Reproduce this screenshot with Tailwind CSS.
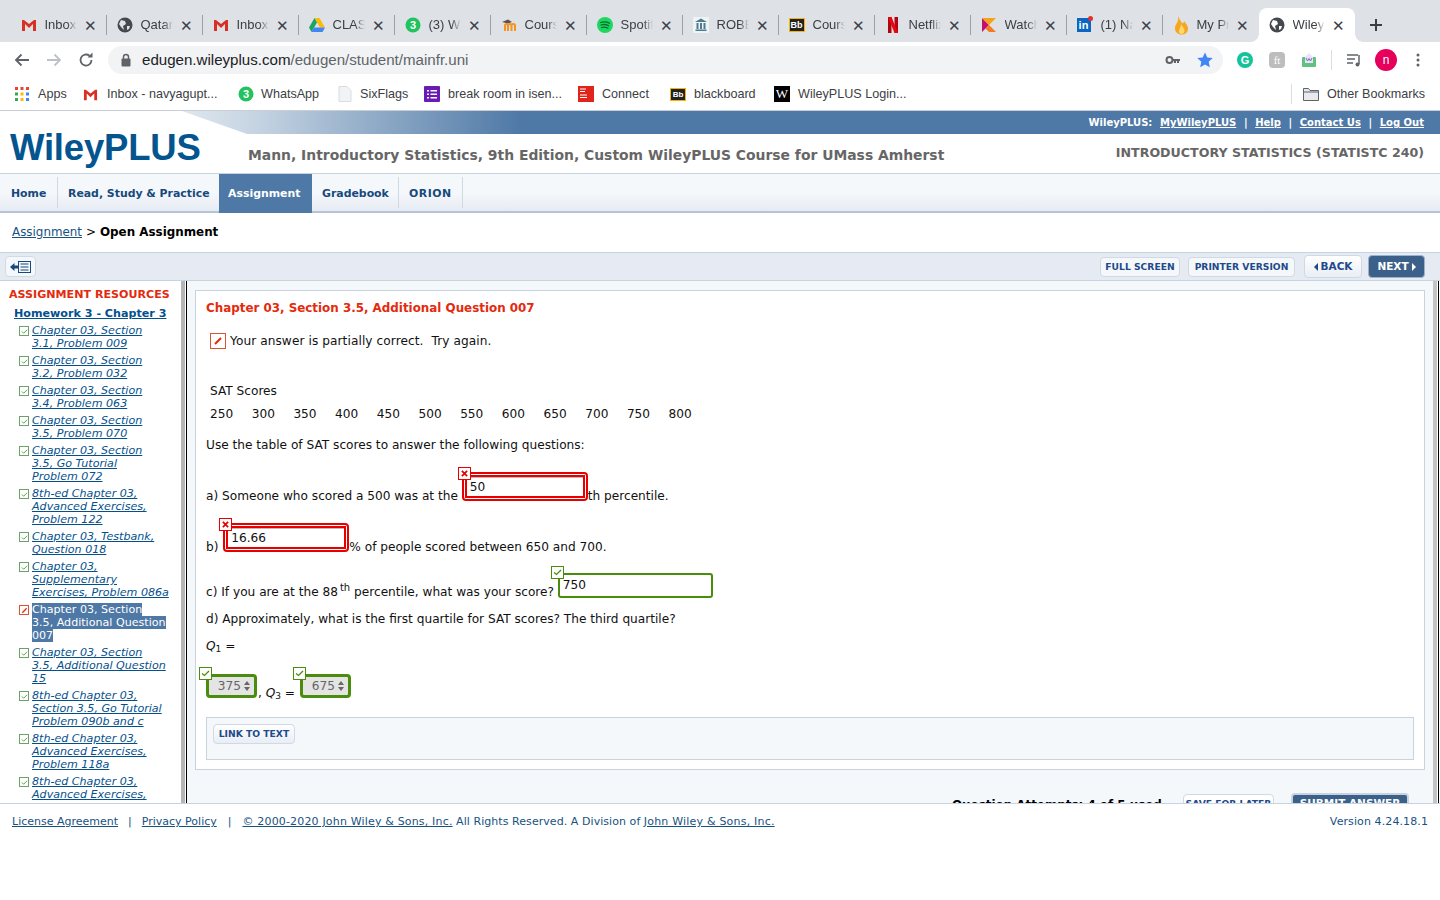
<!DOCTYPE html>
<html lang="en">
<head>
<meta charset="UTF-8">
<title>WileyPLUS</title>
<script src="https://cdn.jsdelivr.net/npm/@tailwindcss/browser@4"></script>
</head>
<body class="w-[1440px] h-[900px] overflow-hidden bg-white font-['DejaVu_Sans',sans-serif] text-black">

<!-- browser tabs -->
<div class="h-[42px] bg-[#dee1e6] flex items-end pl-[10.5px] font-['Liberation_Sans',sans-serif] text-[13px] text-[#3c4043]">
  <div class="w-24 h-[34px] flex items-center pl-[10px] relative"><svg class="w-4 h-4 shrink-0" viewBox="0 0 16 16"><path d="M1 3h2l5 4 5-4h2v11h-3V7L8 11 4 7v7H1z" fill="#d93025"/></svg><span class="ml-2 w-[32px] overflow-hidden whitespace-nowrap [mask-image:linear-gradient(to_right,black_70%,transparent)]">Inbox</span><span class="ml-[7px] text-[15px] leading-none">✕</span><i class="absolute right-0 top-[7px] h-5 w-px bg-[#9aa0a6]"></i></div>
  <div class="w-24 h-[34px] flex items-center pl-[10px] relative"><svg class="w-4 h-4 shrink-0" viewBox="0 0 16 16"><circle cx="8" cy="8" r="7.5" fill="#45494d"/><path d="M4 3l4 1 1 3-3 2 1 4-3-3-2-3zM10 9l3 0-1 3-2 1z" fill="#dee1e6"/></svg><span class="ml-2 w-[32px] overflow-hidden whitespace-nowrap [mask-image:linear-gradient(to_right,black_70%,transparent)]">Qatar</span><span class="ml-[7px] text-[15px] leading-none">✕</span><i class="absolute right-0 top-[7px] h-5 w-px bg-[#9aa0a6]"></i></div>
  <div class="w-24 h-[34px] flex items-center pl-[10px] relative"><svg class="w-4 h-4 shrink-0" viewBox="0 0 16 16"><path d="M1 3h2l5 4 5-4h2v11h-3V7L8 11 4 7v7H1z" fill="#d93025"/></svg><span class="ml-2 w-[32px] overflow-hidden whitespace-nowrap [mask-image:linear-gradient(to_right,black_70%,transparent)]">Inbox</span><span class="ml-[7px] text-[15px] leading-none">✕</span><i class="absolute right-0 top-[7px] h-5 w-px bg-[#9aa0a6]"></i></div>
  <div class="w-24 h-[34px] flex items-center pl-[10px] relative"><svg class="w-4 h-4 shrink-0" viewBox="0 0 16 16"><path d="M5.500 1h5L16 10.500h-5z" fill="#fbbc04"/><path d="M5.500 1 0 10.500 2.500 15 8 5.500z" fill="#1ea362"/><path d="M2.500 15h11l2.500-4.500H5z" fill="#4285f4"/></svg><span class="ml-2 w-[32px] overflow-hidden whitespace-nowrap [mask-image:linear-gradient(to_right,black_70%,transparent)]">CLASS</span><span class="ml-[7px] text-[15px] leading-none">✕</span><i class="absolute right-0 top-[7px] h-5 w-px bg-[#9aa0a6]"></i></div>
  <div class="w-24 h-[34px] flex items-center pl-[10px] relative"><svg class="w-4 h-4 shrink-0" viewBox="0 0 16 16"><circle cx="8" cy="8" r="7.500" fill="#22c35e"/><text x="8" y="12" font-size="11" font-weight="700" text-anchor="middle" fill="#fff" font-family="Liberation Sans">3</text></svg><span class="ml-2 w-[32px] overflow-hidden whitespace-nowrap [mask-image:linear-gradient(to_right,black_70%,transparent)]">(3) Wh</span><span class="ml-[7px] text-[15px] leading-none">✕</span><i class="absolute right-0 top-[7px] h-5 w-px bg-[#9aa0a6]"></i></div>
  <div class="w-24 h-[34px] flex items-center pl-[10px] relative"><svg class="w-4 h-4 shrink-0" viewBox="0 0 16 16"><path d="M1 5l6-2.500L11 5 7 6.500z" fill="#555"/><path d="M4 14V8.500c0-2 3-2 3 0V14M7 8.500c0-2 3.500-2 3.500 0V14M10.500 8.500c0-2 3.500-2 3.500 0V14" fill="none" stroke="#f7931e" stroke-width="2"/></svg><span class="ml-2 w-[32px] overflow-hidden whitespace-nowrap [mask-image:linear-gradient(to_right,black_70%,transparent)]">Course</span><span class="ml-[7px] text-[15px] leading-none">✕</span><i class="absolute right-0 top-[7px] h-5 w-px bg-[#9aa0a6]"></i></div>
  <div class="w-24 h-[34px] flex items-center pl-[10px] relative"><svg class="w-4 h-4 shrink-0" viewBox="0 0 16 16"><circle cx="8" cy="8" r="8" fill="#1ed760"/><path d="M3.500 5.500c3-1 6.500-.7 9 .7M4 8c2.500-.8 5.500-.5 7.700.7M4.500 10.500c2-.6 4.500-.4 6.300.6" fill="none" stroke="#0b6b30" stroke-width="1.300" stroke-linecap="round"/></svg><span class="ml-2 w-[32px] overflow-hidden whitespace-nowrap [mask-image:linear-gradient(to_right,black_70%,transparent)]">Spotify</span><span class="ml-[7px] text-[15px] leading-none">✕</span><i class="absolute right-0 top-[7px] h-5 w-px bg-[#9aa0a6]"></i></div>
  <div class="w-24 h-[34px] flex items-center pl-[10px] relative"><svg class="w-4 h-4 shrink-0" viewBox="0 0 16 16"><rect width="16" height="16" fill="#eef3f5"/><path d="M8 1.500 14 5H2zM2.500 12.500h11V14h-11zM3.500 6h2v6h-2zM7 6h2v6H7zM10.500 6h2v6h-2z" fill="#4d7c8f"/></svg><span class="ml-2 w-[32px] overflow-hidden whitespace-nowrap [mask-image:linear-gradient(to_right,black_70%,transparent)]">ROBE</span><span class="ml-[7px] text-[15px] leading-none">✕</span><i class="absolute right-0 top-[7px] h-5 w-px bg-[#9aa0a6]"></i></div>
  <div class="w-24 h-[34px] flex items-center pl-[10px] relative"><span class="w-4 h-[14px] shrink-0 bg-[#222] border border-[#f5b400] text-white font-bold text-[9px] leading-[12px] text-center">Bb</span><span class="ml-2 w-[32px] overflow-hidden whitespace-nowrap [mask-image:linear-gradient(to_right,black_70%,transparent)]">Course</span><span class="ml-[7px] text-[15px] leading-none">✕</span><i class="absolute right-0 top-[7px] h-5 w-px bg-[#9aa0a6]"></i></div>
  <div class="w-24 h-[34px] flex items-center pl-[10px] relative"><svg class="w-4 h-4 shrink-0" viewBox="0 0 16 16"><path d="M3 0h3.500v16L3 16z" fill="#b1060f"/><path d="M9.500 0H13v16H9.500z" fill="#b1060f"/><path d="M3 0h3.500l6.500 16H9.500z" fill="#e50914"/></svg><span class="ml-2 w-[32px] overflow-hidden whitespace-nowrap [mask-image:linear-gradient(to_right,black_70%,transparent)]">Netflix</span><span class="ml-[7px] text-[15px] leading-none">✕</span><i class="absolute right-0 top-[7px] h-5 w-px bg-[#9aa0a6]"></i></div>
  <div class="w-24 h-[34px] flex items-center pl-[10px] relative"><svg class="w-4 h-4 shrink-0" viewBox="0 0 16 16"><path d="M1 1l7 7-7 7z" fill="#c2116d"/><path d="M1 1h7l7 0-7 7z" fill="#f7a11a"/><path d="M8 8l7 7H8l-3.500-3.500z" fill="#f47b20"/></svg><span class="ml-2 w-[32px] overflow-hidden whitespace-nowrap [mask-image:linear-gradient(to_right,black_70%,transparent)]">Watch</span><span class="ml-[7px] text-[15px] leading-none">✕</span><i class="absolute right-0 top-[7px] h-5 w-px bg-[#9aa0a6]"></i></div>
  <div class="w-24 h-[34px] flex items-center pl-[10px] relative"><span class="relative w-[14px] h-[14px] mr-[2px] shrink-0 bg-[#0a66c2] text-white font-bold text-[11px] leading-[14px] text-center">in<i class="absolute -top-[2px] -right-[2px] w-[5px] h-[5px] rounded-full bg-[#e0312d]"></i></span><span class="ml-2 w-[32px] overflow-hidden whitespace-nowrap [mask-image:linear-gradient(to_right,black_70%,transparent)]">(1) Nav</span><span class="ml-[7px] text-[15px] leading-none">✕</span><i class="absolute right-0 top-[7px] h-5 w-px bg-[#9aa0a6]"></i></div>
  <div class="w-24 h-[34px] flex items-center pl-[10px] relative"><svg class="w-4 h-[20px] shrink-0" viewBox="0 0 16 20"><path d="M5 1c1 3 3 5 4.500 7.500 1-.5 1.500-1.500 1.500-2.500 2 2.500 4 5 4 7.500 0 4-3 6-6.500 6S2 17 2 13.500c0-2 .5-3.500 1.500-5C5 6.500 5.500 4 5 1z" fill="#f5a623"/><path d="M8 9c1 2.500 3.500 4 3.500 6.500S10 19 8.500 19 5.500 17.500 6 15.500 8 12 8 9z" fill="#ffd76a"/></svg><span class="ml-2 w-[32px] overflow-hidden whitespace-nowrap [mask-image:linear-gradient(to_right,black_70%,transparent)]">My Pro</span><span class="ml-[7px] text-[15px] leading-none">✕</span></div>
  <div class="relative w-24 h-[34px] flex items-center pl-[10px] bg-white rounded-t-lg"><i class="absolute -left-2 bottom-0 w-2 h-2 bg-[radial-gradient(circle_at_0_0,transparent_7.5px,white_8px)]"></i><i class="absolute -right-2 bottom-0 w-2 h-2 bg-[radial-gradient(circle_at_100%_0,transparent_7.5px,white_8px)]"></i><svg class="w-4 h-4 shrink-0" viewBox="0 0 16 16"><circle cx="8" cy="8" r="7.500" fill="#45494d"/><path d="M4 3l4 1 1 3-3 2 1 4-3-3-2-3zM10 9l3 0-1 3-2 1z" fill="#fff"/></svg><span class="ml-2 w-[32px] overflow-hidden whitespace-nowrap [mask-image:linear-gradient(to_right,black_70%,transparent)]">WileyP</span><span class="ml-[7px] text-[15px] leading-none">✕</span></div>
  <svg class="w-3 h-3 ml-[15px] mb-[11px]" viewBox="0 0 12 12"><path d="M6 0v12M0 6h12" stroke="#3c4043" stroke-width="2"/></svg>
</div>

<!-- address bar -->
<div class="h-9 flex items-center relative">
  <svg class="w-4 h-4 ml-[14px]" viewBox="0 0 16 16"><path d="M15 8H2M7.500 2.500 2 8l5.500 5.500" fill="none" stroke="#5f6368" stroke-width="1.800"/></svg>
  <svg class="w-4 h-4 ml-4" viewBox="0 0 16 16"><path d="M1 8h13M8.500 2.500 14 8l-5.500 5.500" fill="none" stroke="#bdc1c6" stroke-width="1.800"/></svg>
  <svg class="w-4 h-4 ml-4" viewBox="0 0 16 16"><path d="M13.500 8A5.500 5.500 0 1 1 11.500 3.800" fill="none" stroke="#5f6368" stroke-width="1.800"/><path d="M9.500 5.500h5v-5z" fill="#5f6368"/></svg>
  <div class="ml-[14px] w-[1115px] h-7 rounded-full bg-[#f1f3f4] flex items-center font-['Liberation_Sans',sans-serif] text-[15.1px]">
    <svg class="w-3 h-3.5 ml-3" viewBox="0 0 12 14"><rect x="1.500" y="5.500" width="9" height="8" rx="1" fill="#5f6368"/><path d="M3.500 6V4a2.500 2.500 0 0 1 5 0v2" fill="none" stroke="#5f6368" stroke-width="1.500"/></svg>
    <span class="ml-[10px] text-[#202124]">edugen.wileyplus.com<span class="text-[#5f6368]">/edugen/student/mainfr.uni</span></span>
    <svg class="w-4 h-4 ml-auto" viewBox="0 0 16 16"><circle cx="4.500" cy="8" r="3" fill="none" stroke="#5f6368" stroke-width="2"/><path d="M7 7h8v2h-1v2h-2V9h-1v2H9V9H7z" fill="#5f6368"/></svg>
    <svg class="w-4 h-4 ml-4 mr-[10px]" viewBox="0 0 16 16"><path d="M8 .5l2.300 5 5.400.6-4 3.700 1.100 5.400L8 12.500l-4.800 2.700 1.100-5.400-4-3.700 5.400-.6z" fill="#4285f4"/></svg>
  </div>
  <span class="ml-[14px] w-4 h-4 rounded-full bg-[#15c39a] text-white text-[11px] leading-4 text-center font-['Liberation_Sans',sans-serif] font-bold">G</span>
  <span class="ml-4 w-4 h-4 rounded-sm bg-[#bdbdbd] text-white text-[11px] leading-4 text-center font-['Liberation_Serif',serif]">ft</span>
  <svg class="w-4 h-4 ml-4" viewBox="0 0 16 16"><path d="M1 6c0-1 1-1 1-1h12s1 0 1 1v8c0 1-1 1-1 1H2s-1 0-1-1z" fill="#5fc27e"/><path d="M4 5l4-4 4 4v6H4z" fill="#e8e3f7"/><path d="M5 6l1.500 3 1.500-2.500L9.500 9 11 6" fill="none" stroke="#7b68c9" stroke-width="1"/></svg>
  <i class="ml-[14px] w-px h-5 bg-[#dadce0]"></i>
  <svg class="w-4 h-4 ml-[14px]" viewBox="0 0 16 16"><path d="M1 3h11M1 7h8M1 11h6" stroke="#5f6368" stroke-width="1.500"/><path d="M13 3v9" stroke="#5f6368" stroke-width="1.500"/><circle cx="11.500" cy="12.500" r="2" fill="#5f6368"/></svg>
  <span class="ml-[13px] w-[22px] h-[22px] rounded-full bg-[#e6005c] text-white text-[12px] leading-[22px] text-center font-['Liberation_Sans',sans-serif]">n</span>
  <svg class="w-1 h-4 ml-[19px]" viewBox="0 0 4 16"><circle cx="2" cy="3" r="1.500" fill="#5f6368"/><circle cx="2" cy="8" r="1.500" fill="#5f6368"/><circle cx="2" cy="13" r="1.500" fill="#5f6368"/></svg>
</div>

<!-- bookmarks -->
<div class="h-8 flex items-center font-['Liberation_Sans',sans-serif] text-[12.6px] text-[#3c4043] whitespace-nowrap border-b border-[#c9ced6] box-content">
  <svg class="w-[14px] h-[14px] ml-[15px]" viewBox="0 0 14 14"><path d="M0 0h3v3H0z" fill="#ea4335"/><path d="M5.500 0h3v3h-3z" fill="#ea4335"/><path d="M11 0h3v3h-3z" fill="#ea4335"/><path d="M0 5.500h3v3H0z" fill="#34a853"/><path d="M5.500 5.500h3v3h-3z" fill="#fbbc04"/><path d="M11 5.500h3v3h-3z" fill="#4285f4"/><path d="M0 11h3v3H0z" fill="#34a853"/><path d="M5.500 11h3v3h-3z" fill="#fbbc04"/><path d="M11 11h3v3h-3z" fill="#4285f4"/></svg>
  <span class="ml-[9px] w-[37px]">Apps</span>
  <svg class="w-[15px] h-[15px] ml-[8px]" viewBox="0 0 16 16"><path d="M1 3h2l5 4 5-4h2v11h-3V7L8 11 4 7v7H1z" fill="#d93025"/></svg>
  <span class="ml-[9px] w-[122px]">Inbox - navyagupt...</span>
  <svg class="w-4 h-4 ml-[9px]" viewBox="0 0 16 16"><circle cx="8" cy="8" r="7.500" fill="#22c35e"/><text x="8" y="12" font-size="11" font-weight="700" text-anchor="middle" fill="#fff" font-family="Liberation Sans">3</text></svg>
  <span class="ml-[7px] w-[65px]">WhatsApp</span>
  <svg class="w-[14px] h-4 ml-[12px]" viewBox="0 0 14 16"><path d="M1 .5h8l4 4v11H1z" fill="#f1f3f4" stroke="#dadce0"/></svg>
  <span class="ml-2 w-[55px]">SixFlags</span>
  <svg class="w-4 h-4 ml-[9px]" viewBox="0 0 16 16"><rect width="16" height="16" rx="1" fill="#6a1bb3"/><path d="M3 4h2v1.500H3zM6.500 4H13v1.500H6.500zM3 7.500h2V9H3zM6.500 7.500H13V9H6.500zM3 11h2v1.500H3zM6.500 11H13v1.500H6.500z" fill="#fff"/></svg>
  <span class="ml-2 w-[122px]">break room in isen...</span>
  <svg class="w-4 h-4 ml-2" viewBox="0 0 16 16"><rect width="16" height="16" fill="#e2231a"/><path d="M2 3h6M2 5.500h5M2 9h7M2 11.500h7" stroke="#fff" stroke-width="1"/></svg>
  <span class="ml-2 w-[60px]">Connect</span>
  <span class="w-4 h-[13px] ml-[8px] bg-[#222] border border-[#f5b400] text-white font-bold text-[8px] leading-[11px] text-center">Bb</span>
  <span class="ml-2 w-[72px]">blackboard</span>
  <span class="w-4 h-4 ml-2 bg-black text-white text-[13px] leading-4 text-center font-['Liberation_Serif',serif]">W</span>
  <span class="ml-2 w-[110px]">WileyPLUS Login...</span>
  <i class="ml-[383px] w-px h-5 bg-[#dadce0]"></i>
  <svg class="w-4 h-[14px] ml-[11px]" viewBox="0 0 16 14"><path d="M.5 1.500h5l1.500 2h8.500v10H.5z" fill="#e8eaed" stroke="#5f6368"/><path d="M.5 5h15" stroke="#5f6368"/></svg>
  <span class="ml-2">Other Bookmarks</span>
</div>

<!-- wiley header -->
<div class="relative h-[23px] bg-white">
  <div class="absolute inset-0 left-[182px] [clip-path:polygon(0_0,100%_0,100%_100%,65px_100%)] bg-[linear-gradient(to_right,#dfe7ef_0px,#c3d2e1_80px,#4e78a6_340px)]"></div>
  <div class="relative h-full flex items-center justify-end pr-4 text-white text-[10px] font-bold gap-[7.6px]"><span>WileyPLUS:</span> <span class="underline">MyWileyPLUS</span> <span>|</span> <span class="underline">Help</span> <span>|</span> <span class="underline">Contact Us</span> <span>|</span> <span class="underline">Log Out</span></div>
</div>
<div class="relative h-[39px] flex whitespace-nowrap">
  <div class="absolute left-[10px] -top-[8px] font-['Liberation_Sans',sans-serif] font-bold text-[36.5px] leading-[44px] text-[#04558f] tracking-[-0.2px]">WileyPLUS</div>
  <div class="ml-[248px] mt-[12px] font-bold text-[13.9px] leading-[18px] text-[#666]">Mann, Introductory Statistics, 9th Edition, Custom WileyPLUS Course for UMass Amherst</div>
  <div class="ml-auto mr-4 mt-[10px] font-bold text-[12.62px] leading-[18px] text-[#666]">INTRODUCTORY STATISTICS (STATISTC 240)</div>
</div>

<!-- nav -->
<div class="h-[40px] border-t border-[#c8d3e0] border-b-2 border-b-[#b4c3d6] bg-[linear-gradient(to_bottom,#f5f8fb,#f5f8fb_50%,#e6ebf3)] flex text-[10.9px] font-bold text-[#17497c]">
  <div class="w-[58px] pl-[11px] pt-[3px] flex items-center my-[3px] border-r border-[#cfd9e4]">Home</div>
  <div class="w-[161px] pl-[10px] pt-[3px] flex items-center">Read, Study &amp; Practice</div>
  <div class="w-[93px] pl-[9px] pt-px flex items-center bg-[#4e78a6] text-white -mb-[2px]">Assignment</div>
  <div class="w-[87px] pl-[10px] pt-[3px] flex items-center my-[3px] border-r border-[#cfd9e4]">Gradebook</div>
  <div class="w-[64px] pl-[10px] pt-[3px] flex items-center my-[3px] border-r border-[#cfd9e4] tracking-[0.5px]">ORION</div>
</div>

<!-- breadcrumb -->
<div class="h-[39px] pl-3 flex items-center text-[11.9px] gap-[4px]"><span class="underline text-[#17527f]">Assignment</span> <span>&gt;</span> <span class="font-bold">Open Assignment</span></div>

<!-- toolbar -->
<div class="h-[29px] bg-[#e6eaf2] border-y border-[#c8d3e0] flex items-center pl-[5px] text-[#1f4a8a] font-bold text-[9.2px]">
  <div class="w-[31px] h-[21px] bg-[#f5f8fb] border border-[#d0d9e4] rounded flex items-center justify-center"><svg class="w-[21px] h-3" viewBox="0 0 21 12"><path d="M0 6l4.500-4v2.500H8v3H4.500V10z" fill="#17497c"/><rect x="8.500" y=".5" width="12" height="11" fill="none" stroke="#17497c"/><path d="M10.500 3h8M10.500 6h8M10.500 9h8" stroke="#17497c"/></svg></div>
  <div class="ml-auto h-5 w-20 bg-[#f5f8fb] border border-[#d0d9e4] rounded flex items-center justify-center">FULL SCREEN</div>
  <div class="ml-2 h-5 w-[107px] bg-[#f5f8fb] border border-[#d0d9e4] rounded flex items-center justify-center">PRINTER VERSION</div>
  <div class="ml-[9px] h-[23px] w-[58px] bg-[linear-gradient(to_bottom,#fff,#e9eef5)] border border-[#d0d9e4] rounded flex items-center justify-center text-[10.5px] gap-[3px]"><span class="w-0 h-0 border-y-[4px] border-y-transparent border-r-[4px] border-r-[#1f4a8a]"></span>BACK</div>
  <div class="ml-[6px] mr-[15px] h-[23px] w-[57px] bg-[#3b618a] border border-[#9eb2c9] rounded flex items-center justify-center text-[10.5px] text-white gap-[3px]">NEXT<span class="w-0 h-0 border-y-[4px] border-y-transparent border-l-[4px] border-l-white"></span></div>
</div>

<!-- main -->
<div class="h-[522px] flex overflow-hidden">
  <aside class="w-[181px] shrink-0 pl-[9px] pt-[7px] overflow-hidden">
    <div class="text-[#e32a0d] font-bold text-[11.1px] leading-[13px] whitespace-nowrap">ASSIGNMENT RESOURCES</div>
    <div class="ml-[5px] mt-[6px] text-[#04508c] underline font-bold text-[11.13px] leading-[13px] whitespace-nowrap">Homework 3 - Chapter 3</div>
    <ul class="mt-[4px] ml-[10px] text-[11.1px] leading-[13px] italic text-[#04508c] whitespace-nowrap">
      <li class="flex gap-[3px] mb-[4px]"><span class="mt-[2px] w-[10px] h-[10px] border border-[#6aa36a] shrink-0 flex items-center justify-center"><svg class="w-[7px] h-[7px]" viewBox="0 0 8 8"><path d="M1 4l2 2 4-4" fill="none" stroke="#4e8f2b" stroke-width="1"/></svg></span><a class="underline block">Chapter 03, Section<br>3.1, Problem 009</a></li>
      <li class="flex gap-[3px] mb-[4px]"><span class="mt-[2px] w-[10px] h-[10px] border border-[#6aa36a] shrink-0 flex items-center justify-center"><svg class="w-[7px] h-[7px]" viewBox="0 0 8 8"><path d="M1 4l2 2 4-4" fill="none" stroke="#4e8f2b" stroke-width="1"/></svg></span><a class="underline block">Chapter 03, Section<br>3.2, Problem 032</a></li>
      <li class="flex gap-[3px] mb-[4px]"><span class="mt-[2px] w-[10px] h-[10px] border border-[#6aa36a] shrink-0 flex items-center justify-center"><svg class="w-[7px] h-[7px]" viewBox="0 0 8 8"><path d="M1 4l2 2 4-4" fill="none" stroke="#4e8f2b" stroke-width="1"/></svg></span><a class="underline block">Chapter 03, Section<br>3.4, Problem 063</a></li>
      <li class="flex gap-[3px] mb-[4px]"><span class="mt-[2px] w-[10px] h-[10px] border border-[#6aa36a] shrink-0 flex items-center justify-center"><svg class="w-[7px] h-[7px]" viewBox="0 0 8 8"><path d="M1 4l2 2 4-4" fill="none" stroke="#4e8f2b" stroke-width="1"/></svg></span><a class="underline block">Chapter 03, Section<br>3.5, Problem 070</a></li>
      <li class="flex gap-[3px] mb-[4px]"><span class="mt-[2px] w-[10px] h-[10px] border border-[#6aa36a] shrink-0 flex items-center justify-center"><svg class="w-[7px] h-[7px]" viewBox="0 0 8 8"><path d="M1 4l2 2 4-4" fill="none" stroke="#4e8f2b" stroke-width="1"/></svg></span><a class="underline block">Chapter 03, Section<br>3.5, Go Tutorial<br>Problem 072</a></li>
      <li class="flex gap-[3px] mb-[4px]"><span class="mt-[2px] w-[10px] h-[10px] border border-[#6aa36a] shrink-0 flex items-center justify-center"><svg class="w-[7px] h-[7px]" viewBox="0 0 8 8"><path d="M1 4l2 2 4-4" fill="none" stroke="#4e8f2b" stroke-width="1"/></svg></span><a class="underline block">8th-ed Chapter 03,<br>Advanced Exercises,<br>Problem 122</a></li>
      <li class="flex gap-[3px] mb-[4px]"><span class="mt-[2px] w-[10px] h-[10px] border border-[#6aa36a] shrink-0 flex items-center justify-center"><svg class="w-[7px] h-[7px]" viewBox="0 0 8 8"><path d="M1 4l2 2 4-4" fill="none" stroke="#4e8f2b" stroke-width="1"/></svg></span><a class="underline block">Chapter 03, Testbank,<br>Question 018</a></li>
      <li class="flex gap-[3px] mb-[4px]"><span class="mt-[2px] w-[10px] h-[10px] border border-[#6aa36a] shrink-0 flex items-center justify-center"><svg class="w-[7px] h-[7px]" viewBox="0 0 8 8"><path d="M1 4l2 2 4-4" fill="none" stroke="#4e8f2b" stroke-width="1"/></svg></span><a class="underline block">Chapter 03,<br>Supplementary<br>Exercises, Problem 086a</a></li>
      <li class="flex gap-[3px] mb-[4px]"><span class="mt-[2px] w-[10px] h-[10px] border border-[#e0512e] shrink-0 flex items-center justify-center"><svg class="w-[7px] h-[7px]" viewBox="0 0 8 8"><path d="M1.500 6.500 6.500 1.500" stroke="#e32a0d" stroke-width="1.500"/></svg></span><a class="block not-italic text-white"><span class="bg-[#4e78a6]">Chapter 03, Section<br>3.5, Additional Question<br>007</span></a></li>
      <li class="flex gap-[3px] mb-[4px]"><span class="mt-[2px] w-[10px] h-[10px] border border-[#6aa36a] shrink-0 flex items-center justify-center"><svg class="w-[7px] h-[7px]" viewBox="0 0 8 8"><path d="M1 4l2 2 4-4" fill="none" stroke="#4e8f2b" stroke-width="1"/></svg></span><a class="underline block">Chapter 03, Section<br>3.5, Additional Question<br>15</a></li>
      <li class="flex gap-[3px] mb-[4px]"><span class="mt-[2px] w-[10px] h-[10px] border border-[#6aa36a] shrink-0 flex items-center justify-center"><svg class="w-[7px] h-[7px]" viewBox="0 0 8 8"><path d="M1 4l2 2 4-4" fill="none" stroke="#4e8f2b" stroke-width="1"/></svg></span><a class="underline block">8th-ed Chapter 03,<br>Section 3.5, Go Tutorial<br>Problem 090b and c</a></li>
      <li class="flex gap-[3px] mb-[4px]"><span class="mt-[2px] w-[10px] h-[10px] border border-[#6aa36a] shrink-0 flex items-center justify-center"><svg class="w-[7px] h-[7px]" viewBox="0 0 8 8"><path d="M1 4l2 2 4-4" fill="none" stroke="#4e8f2b" stroke-width="1"/></svg></span><a class="underline block">8th-ed Chapter 03,<br>Advanced Exercises,<br>Problem 118a</a></li>
      <li class="flex gap-[3px] mb-[4px]"><span class="mt-[2px] w-[10px] h-[10px] border border-[#6aa36a] shrink-0 flex items-center justify-center"><svg class="w-[7px] h-[7px]" viewBox="0 0 8 8"><path d="M1 4l2 2 4-4" fill="none" stroke="#4e8f2b" stroke-width="1"/></svg></span><a class="underline block">8th-ed Chapter 03,<br>Advanced Exercises,<br>Problem 118b</a></li>
    </ul>
  </aside>
  <div class="w-[4px] bg-[#b5b5b5] shrink-0"></div>
  <div class="w-[1px] shrink-0"></div>
  <div class="w-[1px] bg-black shrink-0"></div>
  <div class="w-[1246px] bg-[#f5f8fb] shrink-0 pl-[8px] pr-[8px] pt-[9px] overflow-hidden">
    <div class="h-[480px] bg-white border border-[#c8d3e0] pl-[10px] pr-[10px] text-[12.15px] leading-[16px] text-[#111]">
      <h2 class="mt-[9px] text-[#e32a0d] font-bold text-[11.9px] leading-[16px]">Chapter 03, Section 3.5, Additional Question 007</h2>
      <div class="mt-[17px] ml-[4px] flex items-center gap-[4px] tracking-[0.08px]"><span class="w-4 h-4 border border-[#e0512e] flex items-center justify-center"><svg class="w-[10px] h-[10px]" viewBox="0 0 10 10"><path d="M2 8 8 2" stroke="#e32a0d" stroke-width="2"/></svg></span>Your answer is partially correct.&nbsp; Try again.</div>
      <div class="mt-[34px] ml-[4px]">SAT Scores</div>
      <div class="mt-[7px] ml-[4px] flex gap-[18.5px]"><span>250</span><span>300</span><span>350</span><span>400</span><span>450</span><span>500</span><span>550</span><span>600</span><span>650</span><span>700</span><span>750</span><span>800</span></div>
      <p class="mt-[15px]">Use the table of SAT scores to answer the following questions:</p>

      <div class="mt-[17px] h-[31px] flex items-end">
        <span class="mb-[-3px]">a) Someone who scored a 500 was at the&nbsp;</span>
        <span class="relative w-[126px] h-[29px] border-2 border-[#e60000] rounded-[4px] p-px"><span class="block h-full border-2 border-[#e60000] bg-white pl-[3px] leading-[21px] shadow-[inset_0_1px_#bbb]">50</span><i class="absolute -left-[6px] -top-[7px] w-[13px] h-[13px] bg-white border border-[#e60000] flex items-center justify-center"><svg class="w-[7px] h-[7px]" viewBox="0 0 8 8"><path d="M1 1l6 6M7 1 1 7" stroke="#e60000" stroke-width="2"/></svg></i></span>
        <span class="mb-[-3px]">th percentile.</span>
      </div>
      <div class="mt-[20px] h-[31px] flex items-end">
        <span class="mb-[-3px]">b)&nbsp;</span>
        <span class="relative w-[126px] h-[29px] border-2 border-[#e60000] rounded-[4px] p-px ml-px"><span class="block h-full border-2 border-[#e60000] bg-white pl-[3px] leading-[21px] shadow-[inset_0_1px_#bbb]">16.66</span><i class="absolute -left-[6px] -top-[7px] w-[13px] h-[13px] bg-white border border-[#e60000] flex items-center justify-center"><svg class="w-[7px] h-[7px]" viewBox="0 0 8 8"><path d="M1 1l6 6M7 1 1 7" stroke="#e60000" stroke-width="2"/></svg></i></span>
        <span class="mb-[-3px]">% of people scored between 650 and 700.</span>
      </div>
      <div class="mt-[21px] h-[25px] flex items-end">
        <span class="mb-[-2px]">c) If you are at the 88<sup class="text-[10px] -top-[5px] ml-[2px]">th</sup> percentile, what was your score?&nbsp;</span>
        <span class="relative w-[155px] h-[25px] border-2 border-[#4a8c0b] rounded-[3px] bg-white pl-[3px] leading-[21px]">750<i class="absolute -left-[9px] -top-[9px] w-[13px] h-[13px] bg-white border border-[#4a8c0b] flex items-center justify-center"><svg class="w-[9px] h-[9px]" viewBox="0 0 9 9"><path d="M1 4.500l2.500 2L8 2" fill="none" stroke="#4a8c0b" stroke-width="1.300"/></svg></i></span>
      </div>
      <p class="mt-[13px]">d) Approximately, what is the first quartile for SAT scores? The third quartile?</p>
      <p class="mt-[11px]"><span class="italic">Q</span><sub class="text-[9px]">1</sub> =</p>
      <div class="mt-[20px] h-6 flex items-end">
        <span class="relative w-[51px] h-6 border-[3px] border-[#4a8c0b] rounded-[4px] bg-[#e4e4e4] text-[#666] flex items-center justify-end pr-[4px] gap-[3px]">375<span class="flex flex-col gap-[2px]"><i class="w-0 h-0 border-x-[3px] border-x-transparent border-b-[4px] border-b-[#666]"></i><i class="w-0 h-0 border-x-[3px] border-x-transparent border-t-[4px] border-t-[#666]"></i></span><i class="absolute -left-[10px] -top-[10px] w-[13px] h-[13px] bg-white border border-[#4a8c0b] flex items-center justify-center"><svg class="w-[9px] h-[9px]" viewBox="0 0 9 9"><path d="M1 4.500l2.500 2L8 2" fill="none" stroke="#4a8c0b" stroke-width="1.300"/></svg></i></span>
        <span class="mb-[-3px] ml-px mr-px">, <span class="italic">Q</span><sub class="text-[9px]">3</sub> =&nbsp;</span>
        <span class="relative w-[51px] h-6 border-[3px] border-[#4a8c0b] rounded-[4px] bg-[#e4e4e4] text-[#666] flex items-center justify-end pr-[4px] gap-[3px]">675<span class="flex flex-col gap-[2px]"><i class="w-0 h-0 border-x-[3px] border-x-transparent border-b-[4px] border-b-[#666]"></i><i class="w-0 h-0 border-x-[3px] border-x-transparent border-t-[4px] border-t-[#666]"></i></span><i class="absolute -left-[10px] -top-[10px] w-[13px] h-[13px] bg-white border border-[#4a8c0b] flex items-center justify-center"><svg class="w-[9px] h-[9px]" viewBox="0 0 9 9"><path d="M1 4.500l2.500 2L8 2" fill="none" stroke="#4a8c0b" stroke-width="1.300"/></svg></i></span>
      </div>
      <div class="mt-[19px] h-[43px] bg-[#f5f8fb] border border-[#c8d3e0] pl-[6px] pt-[6px]">
        <div class="w-[82px] h-5 bg-[linear-gradient(to_bottom,#fff,#e9eef5)] border border-[#d0d9e4] rounded flex items-center justify-center text-[#1f4a8a] font-bold text-[9.2px]">LINK TO TEXT</div>
      </div>
    </div>
    <div class="mt-[23px] flex items-start">
      <span class="ml-[757px] mt-[4px] font-bold text-[11.9px] leading-[16px] whitespace-nowrap">Question Attempts: 4 of 5 used</span>
      <span class="ml-auto h-5 w-[91px] bg-white border border-[#d0d9e4] rounded flex items-center justify-center text-[#1f4a8a] font-bold text-[9.2px] mt-[1px]">SAVE FOR LATER</span>
      <span class="ml-[17px] mr-[16px] h-[22px] w-[118px] bg-[#3b618a] border-2 border-[#c8d3e0] rounded flex items-center justify-center text-white font-bold text-[10.5px]">SUBMIT ANSWER</span>
    </div>
  </div>
  <div class="w-[4px] bg-[#c4c4c4] shrink-0"></div>
  <div class="w-px shrink-0"></div>
  <div class="w-px bg-black shrink-0"></div>
</div>

<!-- footer -->
<div class="border-t border-[#c8d3e0] h-[97px] px-3 pt-[11px] flex justify-between text-[11px] leading-[14px] text-[#17527f] whitespace-nowrap">
  <div><span class="underline">License Agreement</span> <span class="mx-[6.5px]">|</span> <span class="underline">Privacy Policy</span> <span class="mx-[7.5px]">|</span> <span class="underline tracking-[0.17px]">© 2000-2020 John Wiley &amp; Sons, Inc.</span> <span class="tracking-[0.06px]">All Rights Reserved. A Division of</span> <span class="underline tracking-[0.2px]">John Wiley &amp; Sons, Inc.</span></div>
  <div class="tracking-[0.1px]">Version 4.24.18.1</div>
</div>
</body>
</html>
